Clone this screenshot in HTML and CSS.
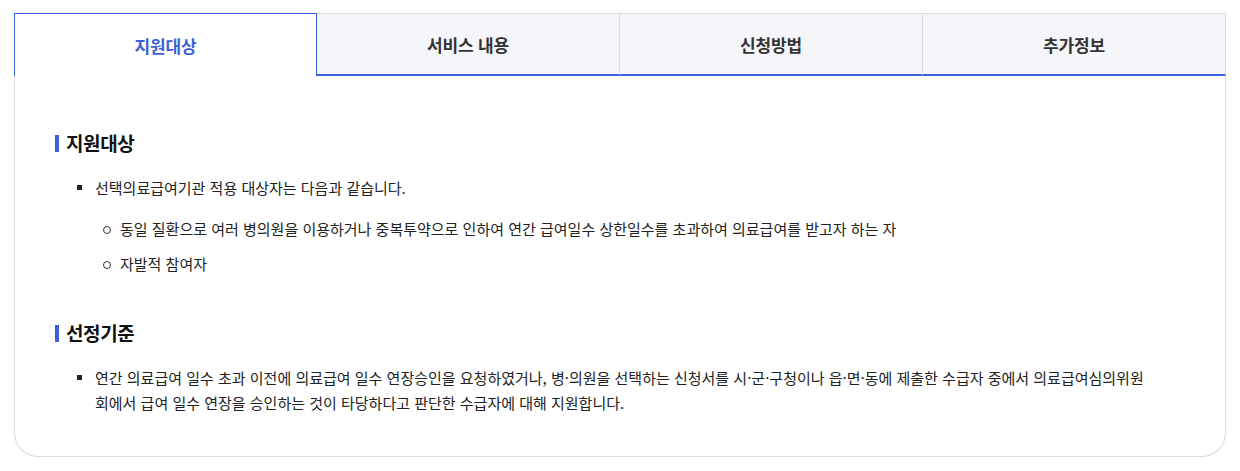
FILE: index.html
```html
<!DOCTYPE html>
<html lang="ko">
<head>
<meta charset="utf-8">
<title>선택의료급여기관</title>
<link rel="stylesheet" href="styles.css">
</head>
<body>
<div class="wrap">
  <div class="tabs">
    <div class="tab active">지원대상</div>
    <div class="tab">서비스 내용</div>
    <div class="tab">신청방법</div>
    <div class="tab">추가정보</div>
  </div>
  <div class="panel">
    <h3 class="title">지원대상</h3>
    <ul class="list">
      <li>선택의료급여기관 적용 대상자는 다음과 같습니다.
        <ul class="sub">
          <li>동일 질환으로 여러 병의원을 이용하거나 중복투약으로 인하여 연간 급여일수 상한일수를 초과하여 의료급여를 받고자 하는 자</li>
          <li>자발적 참여자</li>
        </ul>
      </li>
    </ul>
    <h3 class="title second">선정기준</h3>
    <ul class="list">
      <li>연간 의료급여 일수 초과 이전에 의료급여 일수 연장승인을 요청하였거나, 병·의원을 선택하는 신청서를 시·군·구청이나 읍·면·동에 제출한 수급자 중에서 의료급여심의위원회에서 급여 일수 연장을 승인하는 것이 타당하다고 판단한 수급자에 대해 지원합니다.</li>
    </ul>
  </div>
</div>
</body>
</html>
```

FILE: styles.css
```css
* { box-sizing: border-box; }
html, body { margin: 0; padding: 0; background: #fff; }
body {
  font-family: "Noto Sans CJK KR", "Noto Sans", sans-serif;
  color: #222;
}
.wrap {
  padding: 13px 14px 0 14px;
  width: 1240px;
}
.tabs {
  display: grid;
  grid-template-columns: repeat(4, 1fr);
  width: 1212px;
}
.tab {
  height: 63px;
  display: flex;
  align-items: center;
  justify-content: center;
  font-size: 17px;
  font-weight: 700;
  color: #333;
  background: #f5f6fa;
  border-top: 1px solid #dcdcdc;
  border-right: 1px solid #dcdcdc;
  border-bottom: 2px solid #3d5fd9;
  letter-spacing: -0.2px;
}
.tab.active {
  background: #fff;
  color: #3d5fd9;
  border: 1px solid #3d5fd9;
  border-bottom: none;
}
.panel {
  width: 1212px;
  border: 1px solid #dcdcdc;
  border-top: none;
  border-radius: 0 0 24px 24px;
  padding: 54px 40px 41px 40px;
}
.title {
  margin: 0;
  font-size: 19px;
  line-height: 26px;
  font-weight: 700;
  color: #111;
  display: flex;
  align-items: center;
  gap: 7px;
  letter-spacing: -0.4px;
}
.title::before {
  content: "";
  width: 4px;
  height: 17px;
  background: #3d5fd9;
}
.title.second { margin-top: 44px; }
.list {
  list-style: none;
  margin: 19px 0 0 0;
  padding: 0 0 0 40px;
  max-width: 1096px;
}
.list > li {
  position: relative;
  font-size: 15px;
  line-height: 25px;
  color: #222;
}
.list > li::before {
  content: "";
  position: absolute;
  left: -18px;
  top: 10px;
  width: 5px;
  height: 5px;
  background: #222;
}
.title.second + .list { margin-top: 19px; }
.sub {
  list-style: none;
  margin: 16px 0 0 0;
  padding: 0 0 0 25px;
}
.sub > li {
  position: relative;
  font-size: 15px;
  line-height: 25px;
}
.sub > li + li { margin-top: 10px; }
.sub > li::before {
  content: "";
  position: absolute;
  left: -17px;
  top: 10px;
  width: 6px;
  height: 6px;
  border: 1px solid #333;
  border-radius: 50%;
}
```
